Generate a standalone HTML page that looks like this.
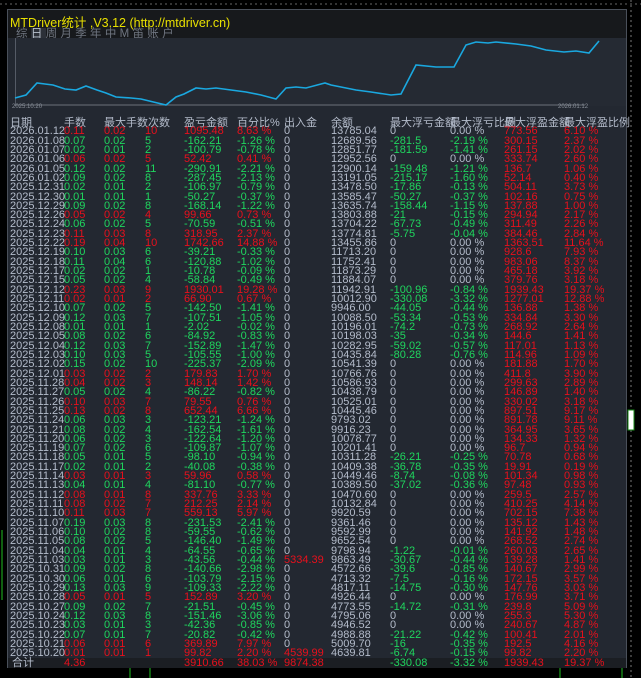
<!DOCTYPE html>
<html><head><meta charset="utf-8">
<style>
*{margin:0;padding:0;box-sizing:border-box}
body{width:641px;height:678px;background:#000;position:relative;overflow:hidden;font-family:"Liberation Sans","Noto Sans CJK SC",sans-serif;font-size:11px}
#panel{position:absolute;left:7px;top:9px;width:620px;height:659px;background:#232831;border:1px solid #4a505a}
#title{position:absolute;left:0;top:0;width:618px;height:28px;background:#17191c}
#title .t{position:absolute;left:2px;top:2px;color:#e8e000;font-size:12.5px}
#title .tabs{position:absolute;left:8px;top:15px;color:#6f7580;font-size:11.5px;letter-spacing:3.3px;white-space:nowrap}
#title .tabs b{font-weight:normal;color:#b8c0cc;background:#2c3038}
#chart{position:absolute;left:7px;top:28px;width:611px;height:68px;background:#252a33;border-left:1px solid #555b66}
.d{position:absolute;top:94px;font-size:6px;color:#8a909a}
.r{position:absolute;left:0;height:9.32px;width:618px;line-height:9.32px;white-space:nowrap}
.r i{position:absolute;font-style:normal;top:0;color:#b4bccb}
.r i:nth-child(1){left:2px}
.r i:nth-child(2){left:56px}
.r i:nth-child(3){left:96px}
.r i:nth-child(4){left:137px}
.r i:nth-child(5){left:176px}
.r i:nth-child(6){left:229px}
.r i:nth-child(7){left:276px}
.r i:nth-child(8){left:323px}
.r i:nth-child(9){left:382px}
.r i:nth-child(10){left:442px}
.r i:nth-child(11){left:496px}
.r i:nth-child(12){left:556px}
.R i:nth-child(n+2):nth-child(-n+6){color:#e8101c}
.G i:nth-child(n+2):nth-child(-n+6){color:#1fd65e}
.r i:nth-child(9),.r i:nth-child(10){color:#1fd65e}
.r i:nth-child(11),.r i:nth-child(12){color:#e8101c}
.r i.z{color:#b4bccb!important}
.r i.x{color:#e8101c!important}
.h i{color:#b4bccb!important}
#tot{position:absolute;left:0;top:648px;width:618px;height:10px;background:#1b1e23}
</style></head><body>
<svg style="position:absolute;left:0;top:0" width="641" height="678">
<line x1="631" y1="0" x2="631" y2="678" stroke="#777" stroke-dasharray="2,3"/>
<line x1="0" y1="4" x2="641" y2="4" stroke="#666" stroke-dasharray="2,3"/>
<rect x="628" y="410" width="6" height="20" fill="#fff" stroke="#1a8a1a"/>
<line x1="2" y1="530" x2="2" y2="600" stroke="#1fbf1f"/>
<line x1="130" y1="668" x2="130" y2="678" stroke="#1fbf1f"/>
<line x1="150" y1="668" x2="150" y2="678" stroke="#1fbf1f"/>
<line x1="560" y1="668" x2="560" y2="678" stroke="#1fbf1f"/>
<line x1="622" y1="668" x2="622" y2="678" stroke="#1fbf1f"/>
</svg>
<div id="panel">
<div id="title"><div class="t">MTDriver统计 ,V3.12 (http://mtdriver.cn)</div>
<div class="tabs">综<b>日</b>周月季年中M笛账户</div></div>
<div id="chart"></div>
<svg style="position:absolute;left:-7px;top:-9px" width="641" height="120">
<line x1="14" y1="104" x2="584" y2="104" stroke="#6a707a"/>
<polyline fill="none" stroke="#1aa8e0" stroke-width="1.6" points="14,97 25,94 36,82 44,83 52,84 64,88 75,89 85,85 96,89 105,92 115,96 130,97 140,98 165,104 175,96 183,93 195,87 205,88 215,87 230,89 245,91 260,94 275,98 285,87 295,86 305,87 320,83 324,82 330,84 340,86 355,89 370,91 390,94 400,93 415,64 435,66 453,66 465,44 475,41 487,42 495,41 515,43 530,45 545,49 563,51 575,50 588,52 598,40"/>
</svg>
<div class="d" style="left:4px">2025.10.20</div><div class="d" style="left:550px">2026.01.12</div>
<div id="tot"></div>
<div style="position:absolute;left:0;top:109px;width:618px">
<div class="r h" style="top:0"><i>日期</i><i>手数</i><i>最大手数次数</i><i></i><i>盈亏金额</i><i>百分比%</i><i>出入金</i><i>余额</i><i>最大浮亏金额</i><i>最大浮亏比例</i><i>最大浮盈金额</i><i>最大浮盈比例</i></div>
</div>
<div style="position:absolute;left:0;top:117.3px;width:618px">
<div class="r R" style="top:0px"><i>2026.01.12</i><i>0.11</i><i>0.02</i><i>10</i><i>1095.48</i><i>8.63 %</i><i>0</i><i>13785.04</i><i class=z>0</i><i class=z>0.00 %</i><i>773.56</i><i>6.10 %</i></div>
<div class="r G" style="top:9.32px"><i>2026.01.08</i><i>0.07</i><i>0.02</i><i>5</i><i>-162.21</i><i>-1.26 %</i><i>0</i><i>12689.56</i><i>-281.5</i><i>-2.19 %</i><i>300.15</i><i>2.37 %</i></div>
<div class="r G" style="top:18.64px"><i>2026.01.07</i><i>0.02</i><i>0.01</i><i>2</i><i>-100.79</i><i>-0.78 %</i><i>0</i><i>12851.77</i><i>-181.59</i><i>-1.41 %</i><i>261.15</i><i>2.02 %</i></div>
<div class="r R" style="top:27.96px"><i>2026.01.06</i><i>0.06</i><i>0.02</i><i>5</i><i>52.42</i><i>0.41 %</i><i>0</i><i>12952.56</i><i class=z>0</i><i class=z>0.00 %</i><i>333.74</i><i>2.60 %</i></div>
<div class="r G" style="top:37.28px"><i>2026.01.05</i><i>0.12</i><i>0.02</i><i>11</i><i>-290.91</i><i>-2.21 %</i><i>0</i><i>12900.14</i><i>-159.48</i><i>-1.21 %</i><i>136.7</i><i>1.06 %</i></div>
<div class="r G" style="top:46.6px"><i>2026.01.02</i><i>0.09</i><i>0.02</i><i>8</i><i>-287.45</i><i>-2.13 %</i><i>0</i><i>13191.05</i><i>-215.17</i><i>-1.60 %</i><i>52.14</i><i>0.40 %</i></div>
<div class="r G" style="top:55.92px"><i>2025.12.31</i><i>0.02</i><i>0.01</i><i>2</i><i>-106.97</i><i>-0.79 %</i><i>0</i><i>13478.50</i><i>-17.86</i><i>-0.13 %</i><i>504.11</i><i>3.73 %</i></div>
<div class="r G" style="top:65.24px"><i>2025.12.30</i><i>0.01</i><i>0.01</i><i>1</i><i>-50.27</i><i>-0.37 %</i><i>0</i><i>13585.47</i><i>-50.27</i><i>-0.37 %</i><i>102.16</i><i>0.75 %</i></div>
<div class="r G" style="top:74.56px"><i>2025.12.29</i><i>0.09</i><i>0.02</i><i>8</i><i>-168.14</i><i>-1.22 %</i><i>0</i><i>13635.74</i><i>-158.44</i><i>-1.15 %</i><i>137.88</i><i>1.00 %</i></div>
<div class="r R" style="top:83.88px"><i>2025.12.26</i><i>0.05</i><i>0.02</i><i>4</i><i>99.66</i><i>0.73 %</i><i>0</i><i>13803.88</i><i>-21</i><i>-0.15 %</i><i>294.94</i><i>2.17 %</i></div>
<div class="r G" style="top:93.2px"><i>2025.12.24</i><i>0.06</i><i>0.02</i><i>5</i><i>-70.59</i><i>-0.51 %</i><i>0</i><i>13704.22</i><i>-67.73</i><i>-0.49 %</i><i>311.49</i><i>2.26 %</i></div>
<div class="r R" style="top:102.52px"><i>2025.12.23</i><i>0.11</i><i>0.03</i><i>8</i><i>318.95</i><i>2.37 %</i><i>0</i><i>13774.81</i><i>-5.75</i><i>-0.04 %</i><i>384.46</i><i>2.84 %</i></div>
<div class="r R" style="top:111.84px"><i>2025.12.22</i><i>0.19</i><i>0.04</i><i>10</i><i>1742.66</i><i>14.88 %</i><i>0</i><i>13455.86</i><i class=z>0</i><i class=z>0.00 %</i><i>1363.51</i><i>11.64 %</i></div>
<div class="r G" style="top:121.16px"><i>2025.12.19</i><i>0.10</i><i>0.03</i><i>6</i><i>-39.21</i><i>-0.33 %</i><i>0</i><i>11713.20</i><i class=z>0</i><i class=z>0.00 %</i><i>928.6</i><i>7.93 %</i></div>
<div class="r G" style="top:130.48px"><i>2025.12.18</i><i>0.11</i><i>0.04</i><i>6</i><i>-120.88</i><i>-1.02 %</i><i>0</i><i>11752.41</i><i class=z>0</i><i class=z>0.00 %</i><i>983.06</i><i>8.37 %</i></div>
<div class="r G" style="top:139.8px"><i>2025.12.17</i><i>0.02</i><i>0.02</i><i>1</i><i>-10.78</i><i>-0.09 %</i><i>0</i><i>11873.29</i><i class=z>0</i><i class=z>0.00 %</i><i>465.18</i><i>3.92 %</i></div>
<div class="r G" style="top:149.12px"><i>2025.12.15</i><i>0.05</i><i>0.02</i><i>4</i><i>-58.84</i><i>-0.49 %</i><i>0</i><i>11884.07</i><i class=z>0</i><i class=z>0.00 %</i><i>379.76</i><i>3.18 %</i></div>
<div class="r R" style="top:158.44px"><i>2025.12.12</i><i>0.23</i><i>0.03</i><i>9</i><i>1930.01</i><i>19.28 %</i><i>0</i><i>11942.91</i><i>-100.96</i><i>-0.84 %</i><i>1939.43</i><i>19.37 %</i></div>
<div class="r R" style="top:167.76px"><i>2025.12.11</i><i>0.02</i><i>0.01</i><i>2</i><i>66.90</i><i>0.67 %</i><i>0</i><i>10012.90</i><i>-330.08</i><i>-3.32 %</i><i>1277.01</i><i>12.88 %</i></div>
<div class="r G" style="top:177.08px"><i>2025.12.10</i><i>0.07</i><i>0.02</i><i>5</i><i>-142.50</i><i>-1.41 %</i><i>0</i><i>9946.00</i><i>-44.05</i><i>-0.44 %</i><i>136.88</i><i>1.38 %</i></div>
<div class="r G" style="top:186.4px"><i>2025.12.09</i><i>0.12</i><i>0.03</i><i>7</i><i>-107.51</i><i>-1.05 %</i><i>0</i><i>10088.50</i><i>-53.34</i><i>-0.53 %</i><i>334.84</i><i>3.30 %</i></div>
<div class="r G" style="top:195.72px"><i>2025.12.08</i><i>0.01</i><i>0.01</i><i>1</i><i>-2.02</i><i>-0.02 %</i><i>0</i><i>10196.01</i><i>-74.2</i><i>-0.73 %</i><i>268.92</i><i>2.64 %</i></div>
<div class="r G" style="top:205.04px"><i>2025.12.05</i><i>0.08</i><i>0.02</i><i>6</i><i>-84.92</i><i>-0.83 %</i><i>0</i><i>10198.03</i><i>-35</i><i>-0.34 %</i><i>144.6</i><i>1.41 %</i></div>
<div class="r G" style="top:214.36px"><i>2025.12.04</i><i>0.12</i><i>0.03</i><i>7</i><i>-152.89</i><i>-1.47 %</i><i>0</i><i>10282.95</i><i>-59.02</i><i>-0.57 %</i><i>117.01</i><i>1.13 %</i></div>
<div class="r G" style="top:223.68px"><i>2025.12.03</i><i>0.10</i><i>0.03</i><i>5</i><i>-105.55</i><i>-1.00 %</i><i>0</i><i>10435.84</i><i>-80.28</i><i>-0.76 %</i><i>114.96</i><i>1.09 %</i></div>
<div class="r G" style="top:233px"><i>2025.12.02</i><i>0.15</i><i>0.02</i><i>10</i><i>-225.37</i><i>-2.09 %</i><i>0</i><i>10541.39</i><i class=z>0</i><i class=z>0.00 %</i><i>181.88</i><i>1.70 %</i></div>
<div class="r R" style="top:242.32px"><i>2025.12.01</i><i>0.03</i><i>0.02</i><i>2</i><i>179.83</i><i>1.70 %</i><i>0</i><i>10766.76</i><i class=z>0</i><i class=z>0.00 %</i><i>411.8</i><i>3.90 %</i></div>
<div class="r R" style="top:251.64px"><i>2025.11.28</i><i>0.04</i><i>0.02</i><i>3</i><i>148.14</i><i>1.42 %</i><i>0</i><i>10586.93</i><i class=z>0</i><i class=z>0.00 %</i><i>299.63</i><i>2.89 %</i></div>
<div class="r G" style="top:260.96px"><i>2025.11.27</i><i>0.05</i><i>0.02</i><i>4</i><i>-86.22</i><i>-0.82 %</i><i>0</i><i>10438.79</i><i class=z>0</i><i class=z>0.00 %</i><i>146.89</i><i>1.40 %</i></div>
<div class="r R" style="top:270.28px"><i>2025.11.26</i><i>0.10</i><i>0.03</i><i>7</i><i>79.55</i><i>0.76 %</i><i>0</i><i>10525.01</i><i class=z>0</i><i class=z>0.00 %</i><i>330.02</i><i>3.18 %</i></div>
<div class="r R" style="top:279.6px"><i>2025.11.25</i><i>0.13</i><i>0.02</i><i>8</i><i>652.44</i><i>6.66 %</i><i>0</i><i>10445.46</i><i class=z>0</i><i class=z>0.00 %</i><i>897.51</i><i>9.17 %</i></div>
<div class="r G" style="top:288.92px"><i>2025.11.24</i><i>0.06</i><i>0.03</i><i>3</i><i>-123.21</i><i>-1.24 %</i><i>0</i><i>9793.02</i><i class=z>0</i><i class=z>0.00 %</i><i>891.78</i><i>9.11 %</i></div>
<div class="r G" style="top:298.24px"><i>2025.11.21</i><i>0.08</i><i>0.02</i><i>4</i><i>-162.54</i><i>-1.61 %</i><i>0</i><i>9916.23</i><i class=z>0</i><i class=z>0.00 %</i><i>364.95</i><i>3.65 %</i></div>
<div class="r G" style="top:307.56px"><i>2025.11.20</i><i>0.06</i><i>0.02</i><i>3</i><i>-122.64</i><i>-1.20 %</i><i>0</i><i>10078.77</i><i class=z>0</i><i class=z>0.00 %</i><i>134.33</i><i>1.32 %</i></div>
<div class="r G" style="top:316.88px"><i>2025.11.19</i><i>0.07</i><i>0.02</i><i>6</i><i>-109.87</i><i>-1.07 %</i><i>0</i><i>10201.41</i><i class=z>0</i><i class=z>0.00 %</i><i>96.7</i><i>0.94 %</i></div>
<div class="r G" style="top:326.2px"><i>2025.11.18</i><i>0.05</i><i>0.01</i><i>5</i><i>-98.10</i><i>-0.94 %</i><i>0</i><i>10311.28</i><i>-26.21</i><i>-0.25 %</i><i>70.78</i><i>0.68 %</i></div>
<div class="r G" style="top:335.52px"><i>2025.11.17</i><i>0.02</i><i>0.01</i><i>2</i><i>-40.08</i><i>-0.38 %</i><i>0</i><i>10409.38</i><i>-36.78</i><i>-0.35 %</i><i>19.91</i><i>0.19 %</i></div>
<div class="r R" style="top:344.84px"><i>2025.11.14</i><i>0.03</i><i>0.01</i><i>3</i><i>59.96</i><i>0.58 %</i><i>0</i><i>10449.46</i><i>-8.74</i><i>-0.08 %</i><i>101.34</i><i>0.98 %</i></div>
<div class="r G" style="top:354.16px"><i>2025.11.13</i><i>0.04</i><i>0.01</i><i>4</i><i>-81.10</i><i>-0.77 %</i><i>0</i><i>10389.50</i><i>-37.02</i><i>-0.36 %</i><i>97.48</i><i>0.93 %</i></div>
<div class="r R" style="top:363.48px"><i>2025.11.12</i><i>0.08</i><i>0.01</i><i>8</i><i>337.76</i><i>3.33 %</i><i>0</i><i>10470.60</i><i class=z>0</i><i class=z>0.00 %</i><i>259.5</i><i>2.57 %</i></div>
<div class="r R" style="top:372.8px"><i>2025.11.11</i><i>0.08</i><i>0.02</i><i>7</i><i>212.25</i><i>2.14 %</i><i>0</i><i>10132.84</i><i class=z>0</i><i class=z>0.00 %</i><i>410.25</i><i>4.14 %</i></div>
<div class="r R" style="top:382.12px"><i>2025.11.10</i><i>0.11</i><i>0.03</i><i>7</i><i>559.13</i><i>5.97 %</i><i>0</i><i>9920.59</i><i class=z>0</i><i class=z>0.00 %</i><i>702.15</i><i>7.38 %</i></div>
<div class="r G" style="top:391.44px"><i>2025.11.07</i><i>0.19</i><i>0.03</i><i>8</i><i>-231.53</i><i>-2.41 %</i><i>0</i><i>9361.46</i><i class=z>0</i><i class=z>0.00 %</i><i>135.12</i><i>1.43 %</i></div>
<div class="r G" style="top:400.76px"><i>2025.11.06</i><i>0.10</i><i>0.02</i><i>8</i><i>-59.55</i><i>-0.62 %</i><i>0</i><i>9592.99</i><i class=z>0</i><i class=z>0.00 %</i><i>141.92</i><i>1.48 %</i></div>
<div class="r G" style="top:410.08px"><i>2025.11.05</i><i>0.08</i><i>0.02</i><i>5</i><i>-146.40</i><i>-1.49 %</i><i>0</i><i>9652.54</i><i class=z>0</i><i class=z>0.00 %</i><i>268.52</i><i>2.74 %</i></div>
<div class="r G" style="top:419.4px"><i>2025.11.04</i><i>0.04</i><i>0.01</i><i>4</i><i>-64.55</i><i>-0.65 %</i><i>0</i><i>9798.94</i><i>-1.22</i><i>-0.01 %</i><i>260.03</i><i>2.65 %</i></div>
<div class="r G" style="top:428.72px"><i>2025.11.03</i><i>0.03</i><i>0.01</i><i>3</i><i>-43.56</i><i>-0.44 %</i><i class=x>5334.39</i><i>9863.49</i><i>-30.67</i><i>-0.44 %</i><i>139.28</i><i>1.41 %</i></div>
<div class="r G" style="top:438.04px"><i>2025.10.31</i><i>0.09</i><i>0.02</i><i>8</i><i>-140.66</i><i>-2.98 %</i><i>0</i><i>4572.66</i><i>-39.6</i><i>-0.85 %</i><i>140.67</i><i>2.99 %</i></div>
<div class="r G" style="top:447.36px"><i>2025.10.30</i><i>0.06</i><i>0.01</i><i>6</i><i>-103.79</i><i>-2.15 %</i><i>0</i><i>4713.32</i><i>-7.5</i><i>-0.16 %</i><i>172.15</i><i>3.57 %</i></div>
<div class="r G" style="top:456.68px"><i>2025.10.29</i><i>0.13</i><i>0.03</i><i>9</i><i>-109.33</i><i>-2.22 %</i><i>0</i><i>4817.11</i><i>-14.75</i><i>-0.30 %</i><i>147.76</i><i>3.03 %</i></div>
<div class="r R" style="top:466px"><i>2025.10.28</i><i>0.05</i><i>0.01</i><i>5</i><i>152.89</i><i>3.20 %</i><i>0</i><i>4926.44</i><i class=z>0</i><i class=z>0.00 %</i><i>176.99</i><i>3.71 %</i></div>
<div class="r G" style="top:475.32px"><i>2025.10.27</i><i>0.09</i><i>0.02</i><i>7</i><i>-21.51</i><i>-0.45 %</i><i>0</i><i>4773.55</i><i>-14.72</i><i>-0.31 %</i><i>239.8</i><i>5.09 %</i></div>
<div class="r G" style="top:484.64px"><i>2025.10.24</i><i>0.12</i><i>0.03</i><i>8</i><i>-151.46</i><i>-3.06 %</i><i>0</i><i>4795.06</i><i class=z>0</i><i class=z>0.00 %</i><i>255.3</i><i>5.30 %</i></div>
<div class="r G" style="top:493.96px"><i>2025.10.23</i><i>0.03</i><i>0.01</i><i>3</i><i>-42.36</i><i>-0.85 %</i><i>0</i><i>4946.52</i><i class=z>0</i><i class=z>0.00 %</i><i>240.67</i><i>4.87 %</i></div>
<div class="r G" style="top:503.28px"><i>2025.10.22</i><i>0.07</i><i>0.01</i><i>7</i><i>-20.82</i><i>-0.42 %</i><i>0</i><i>4988.88</i><i>-21.22</i><i>-0.42 %</i><i>100.41</i><i>2.01 %</i></div>
<div class="r R" style="top:512.6px"><i>2025.10.21</i><i>0.06</i><i>0.01</i><i>6</i><i>369.89</i><i>7.97 %</i><i>0</i><i>5009.70</i><i>-16</i><i>-0.35 %</i><i>192.5</i><i>4.16 %</i></div>
<div class="r R" style="top:521.92px"><i>2025.10.20</i><i>0.01</i><i>0.01</i><i>1</i><i>99.82</i><i>2.20 %</i><i class=x>4539.99</i><i>4639.81</i><i>-6.74</i><i>-0.15 %</i><i>99.82</i><i>2.20 %</i></div>
<div class="r R" style="top:531.5px"><i style="left:4px">合计</i><i>4.36</i><i></i><i></i><i>3910.66</i><i>38.03 %</i><i class=x>9874.38</i><i></i><i>-330.08</i><i>-3.32 %</i><i>1939.43</i><i>19.37 %</i></div>
</div>
</div>
</body></html>
